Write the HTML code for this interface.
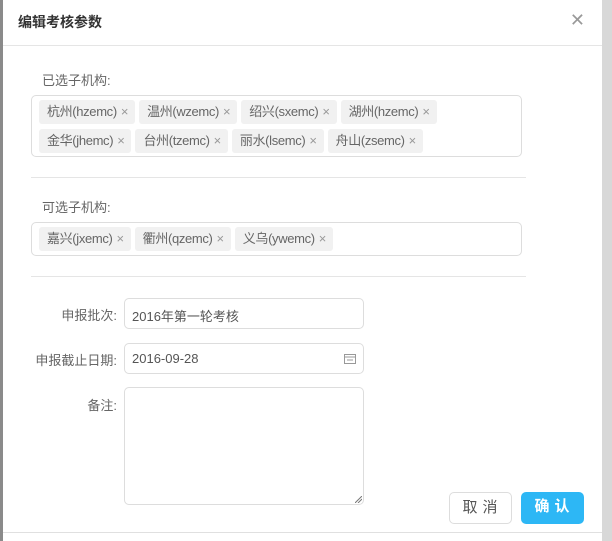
<!DOCTYPE html>
<html><head><meta charset="utf-8">
<style>
*{box-sizing:border-box;margin:0;padding:0}
body{width:612px;height:541px;overflow:hidden;background:#8a8a8a;font-family:"Liberation Sans","Noto Sans CJK SC",sans-serif;position:relative;color:#555}
.rb{position:absolute;left:602px;top:0;width:10px;height:541px;background:#d8d8d8}
.dlg{position:absolute;left:3px;top:0;width:599px;height:541px;background:#fff}
.hd{height:46px;border-bottom:1px solid #e5e5e5;position:relative}
.hd h3{position:absolute;left:15px;top:12px;font-size:14px;font-weight:bold;color:#333}
.x{position:absolute;right:17px;top:10px;font-size:18px;color:#999;font-weight:300}
.lab{position:absolute;font-size:13px;color:#666}
.box{position:absolute;left:28px;width:491px;border:1px solid #ddd;border-radius:5px;padding:3px 0 0 7px}
.tag{display:inline-block;height:24px;line-height:24px;background:#f1f1f1;border-radius:3px;padding:0 7px 0 8px;margin:1px 4px 4px 0;font-size:13px;color:#666;letter-spacing:-0.35px}
.tag i{font-style:normal;color:#999;margin-left:4px}
.hr{position:absolute;left:28px;width:495px;height:1px;background:#e5e5e5}
.fl{position:absolute;font-size:13px;color:#666;text-align:right;width:114px;left:0}
.in{position:absolute;left:121px;width:240px;height:31px;border:1px solid #ddd;border-radius:5px;font-size:13px;color:#555;padding:7px 0 0 7px}
.btn{position:absolute;top:492px;height:32px;width:63px;border-radius:5px;font-size:15px;text-align:center;line-height:30px;letter-spacing:5px;padding-left:4px}
</style></head><body>
<div class="rb"></div>
<div class="dlg">
<div class="hd"><h3>编辑考核参数</h3><span class="x">✕</span></div>
<div class="lab" style="left:39px;top:70px">已选子机构:</div>
<div class="box" style="top:95px;height:62px">
<span class="tag">杭州(hzemc)<i>×</i></span><span class="tag">温州(wzemc)<i>×</i></span><span class="tag">绍兴(sxemc)<i>×</i></span><span class="tag">湖州(hzemc)<i>×</i></span><br><span class="tag">金华(jhemc)<i>×</i></span><span class="tag">台州(tzemc)<i>×</i></span><span class="tag">丽水(lsemc)<i>×</i></span><span class="tag">舟山(zsemc)<i>×</i></span>
</div>
<div class="hr" style="top:177px"></div>
<div class="lab" style="left:39px;top:197px">可选子机构:</div>
<div class="box" style="top:222px;height:34px">
<span class="tag">嘉兴(jxemc)<i>×</i></span><span class="tag">衢州(qzemc)<i>×</i></span><span class="tag">义乌(ywemc)<i>×</i></span>
</div>
<div class="hr" style="top:276px"></div>
<div class="fl" style="top:305px">申报批次:</div>
<div class="in" style="top:298px">2016年第一轮考核</div>
<div class="fl" style="top:350px">申报截止日期:</div>
<div class="in" style="top:343px">2016-09-28
<svg style="position:absolute;right:7px;top:9px" width="12" height="11" viewBox="0 0 12 11"><rect x="0.5" y="1.5" width="11" height="9" fill="none" stroke="#999"/><line x1="0" y1="4" x2="12" y2="4" stroke="#999"/><line x1="3" y1="7" x2="9" y2="7" stroke="#999"/></svg></div>
<div class="fl" style="top:395px">备注:</div>
<div class="in" style="top:387px;height:118px"><svg style="position:absolute;right:1px;bottom:1px" width="7" height="7"><line x1="0" y1="7" x2="7" y2="0" stroke="#777"/><line x1="3" y1="7" x2="7" y2="3" stroke="#777"/></svg></div>
<div class="btn" style="left:446px;border:1px solid #ddd;color:#555">取消</div>
<div class="btn" style="left:518px;background:#2db7f5;color:#fff;font-weight:bold">确认</div>
<div style="position:absolute;left:0;top:532px;width:599px;height:1px;background:#e0e0e0"></div>
</div>
</body></html>
